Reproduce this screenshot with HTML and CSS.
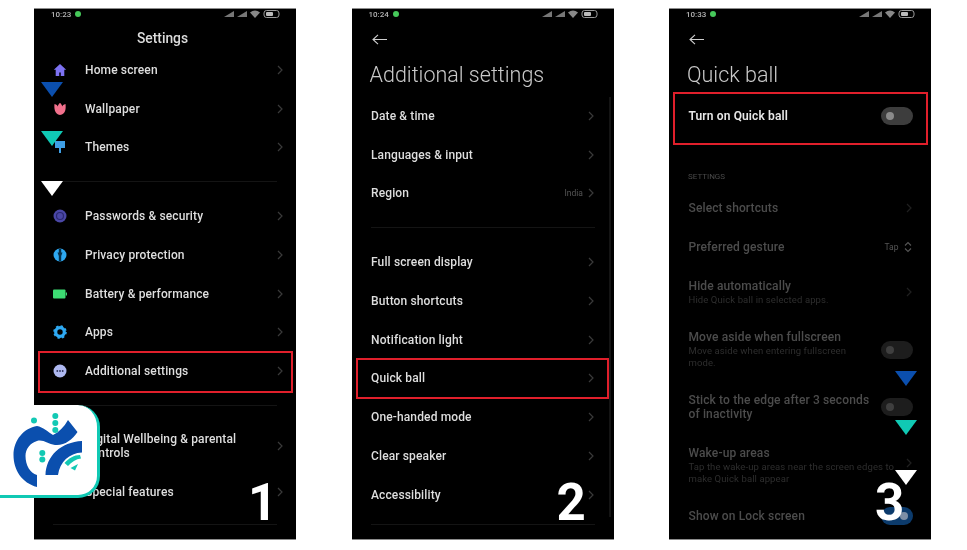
FILE: index.html
```html
<!DOCTYPE html>
<html lang="en">
<head>
<meta charset="utf-8">
<title>Quick ball steps</title>
<link rel="stylesheet" href="styles.css">
</head>
<body>
<svg class="defs" width="0" height="0" aria-hidden="true">
  <defs>
    <symbol id="chev" viewBox="0 0 6 10"><path d="M1 1l4 4-4 4" fill="none" stroke="#3a3a3a" stroke-width="1.2"/></symbol>
    <symbol id="arrow" viewBox="0 0 15 11"><path d="M15 5.500H1M6 .8L1 5.500l5 4.700" fill="none" stroke="#cfcfcf" stroke-width="1.100"/></symbol>
    <symbol id="stat" viewBox="0 0 57 10">
      <path d="M1 8L11 2v6z" fill="#777"/><path d="M14 8L24 2v6z" fill="#777"/>
      <path d="M27 3.5Q32-.5 37 3.5L32 9z" fill="#888"/>
      <rect x="41" y="1.5" width="15" height="7" rx="2.5" fill="none" stroke="#999"/><rect x="43" y="3" width="7" height="4" rx="1" fill="#bbb"/>
    </symbol>
  </defs>
</svg>
<main class="stage">

  <section class="phone p1">
    <div class="status"><span class="time">10:23</span><i class="dot"></i><svg class="stat"><use href="#stat"/></svg></div>
    <h2 class="center-title">Settings</h2>
    <div class="group">
      <div class="row"><svg class="ico" viewBox="0 0 14 14"><path d="M7 1L.8 6.8h1.9V13h8.6V6.8h1.9z" fill="#7d72f2"/><rect x="6" y="9.5" width="2" height="3.5" fill="#1b1840"/></svg><span class="label">Home screen</span><svg class="chev"><use href="#chev"/></svg></div>
      <div class="row"><svg class="ico" viewBox="0 0 14 14"><path d="M1.5 2c2 .5 3 1.5 3.2 2.5C5 3 6 1.5 7 1c1 .5 2 2 2.3 3.5C9.500 3.500 10.500 2.500 12.500 2c.5 4 .5 10-5.500 11C1.500 12 1 6 1.500 2z" fill="#f1708c"/></svg><span class="label">Wallpaper</span><svg class="chev"><use href="#chev"/></svg></div>
      <div class="row"><svg class="ico" viewBox="0 0 14 14"><path d="M2 1h10v7H8v5H6V8H2z" fill="#3f9fe6"/></svg><span class="label">Themes</span><svg class="chev"><use href="#chev"/></svg></div>
    </div>
    <hr class="rule">
    <div class="group">
      <div class="row"><svg class="ico" viewBox="0 0 14 14"><circle cx="7" cy="7" r="6.500" fill="#4a47a6"/><circle cx="7" cy="7" r="3.500" fill="none" stroke="#2a2870" stroke-width="1.200"/></svg><span class="label">Passwords &amp; security</span><svg class="chev"><use href="#chev"/></svg></div>
      <div class="row"><svg class="ico" viewBox="0 0 14 14"><circle cx="7" cy="7" r="6.500" fill="#2ea9f2"/><path d="M5.800 1h2.400v3.500H9.500L8.200 8v5H5.800V8L4.500 4.500h1.300z" fill="#06314d"/></svg><span class="label">Privacy protection</span><svg class="chev"><use href="#chev"/></svg></div>
      <div class="row"><svg class="ico" viewBox="0 0 14 14"><rect x="0" y="2.500" width="12.500" height="9" rx="1" fill="#3ddc73"/><rect x="12.800" y="5.500" width="1.200" height="3" fill="#3ddc73"/></svg><span class="label">Battery &amp; performance</span><svg class="chev"><use href="#chev"/></svg></div>
      <div class="row"><svg class="ico" viewBox="0 0 14 14"><circle cx="7" cy="7" r="4.300" fill="none" stroke="#2ea9f2" stroke-width="3.200"/><circle cx="7" cy="7" r="6" fill="none" stroke="#2ea9f2" stroke-width="1.600" stroke-dasharray="2.400 2.300"/></svg><span class="label">Apps</span><svg class="chev"><use href="#chev"/></svg></div>
      <div class="row hl"><svg class="ico" viewBox="0 0 14 14"><circle cx="7" cy="7" r="6.500" fill="#aeb8f0"/><circle cx="4.300" cy="7" r=".9" fill="#2c3158"/><circle cx="7" cy="7" r=".9" fill="#2c3158"/><circle cx="9.700" cy="7" r=".9" fill="#2c3158"/></svg><span class="label">Additional settings</span><svg class="chev"><use href="#chev"/></svg></div>
    </div>
    <hr class="rule wide">
    <div class="group">
      <div class="row tall"><span class="label multi">Digital Wellbeing &amp; parental controls</span><svg class="chev"><use href="#chev"/></svg></div>
      <div class="row"><span class="label">Special features</span><svg class="chev"><use href="#chev"/></svg></div>
    </div>
    <hr class="rule end">
    <strong class="num">1</strong>
  </section>

  <section class="phone p2">
    <div class="status"><span class="time">10:24</span><i class="dot"></i><svg class="stat"><use href="#stat"/></svg></div>
    <div class="back"><svg class="arrow"><use href="#arrow"/></svg></div>
    <h1 class="title">Additional settings</h1>
    <i class="scroll"></i>
    <div class="group">
      <div class="row"><span class="label">Date &amp; time</span><svg class="chev"><use href="#chev"/></svg></div>
      <div class="row"><span class="label">Languages &amp; input</span><svg class="chev"><use href="#chev"/></svg></div>
      <div class="row"><span class="label">Region</span><span class="value">India</span><svg class="chev"><use href="#chev"/></svg></div>
    </div>
    <hr class="rule">
    <div class="group">
      <div class="row"><span class="label">Full screen display</span><svg class="chev"><use href="#chev"/></svg></div>
      <div class="row"><span class="label">Button shortcuts</span><svg class="chev"><use href="#chev"/></svg></div>
      <div class="row"><span class="label">Notification light</span><svg class="chev"><use href="#chev"/></svg></div>
      <div class="row hl"><span class="label">Quick ball</span><svg class="chev"><use href="#chev"/></svg></div>
      <div class="row"><span class="label">One-handed mode</span><svg class="chev"><use href="#chev"/></svg></div>
      <div class="row"><span class="label">Clear speaker</span><svg class="chev"><use href="#chev"/></svg></div>
      <div class="row"><span class="label">Accessibility</span><svg class="chev"><use href="#chev"/></svg></div>
    </div>
    <hr class="rule end2">
    <strong class="num">2</strong>
  </section>

  <section class="phone p3">
    <div class="status"><span class="time">10:33</span><i class="dot"></i><svg class="stat"><use href="#stat"/></svg></div>
    <div class="back"><svg class="arrow"><use href="#arrow"/></svg></div>
    <h1 class="title">Quick ball</h1>
    <div class="row hl hl3"><span class="label strong">Turn on Quick ball</span><i class="toggle"></i></div>
    <div class="section-head">SETTINGS</div>
    <div class="row off"><span class="label">Select shortcuts</span><svg class="chev"><use href="#chev"/></svg></div>
    <div class="row off"><span class="label">Preferred gesture</span><span class="value">Tap</span><svg class="updown" viewBox="0 0 8 12"><path d="M1 4.500L4 1.500l3 3M1 7.500l3 3 3-3" fill="none" stroke="#555" stroke-width="1.100"/></svg></div>
    <div class="row off h-hide"><div class="label"><div>Hide automatically</div><div class="sub">Hide Quick ball in selected apps.</div></div><svg class="chev"><use href="#chev"/></svg></div>
    <div class="row off h-move"><div class="label"><div>Move aside when fullscreen</div><div class="sub">Move aside when entering fullscreen mode.</div></div><i class="toggle dim"></i></div>
    <div class="row off h-stick"><div class="label">Stick to the edge after 3 seconds of inactivity</div><i class="toggle dim"></i></div>
    <div class="row off h-wake"><div class="label"><div>Wake-up areas</div><div class="sub">Tap the wake-up areas near the screen edges to make Quick ball appear</div></div><svg class="chev"><use href="#chev"/></svg></div>
    <div class="row off h-show"><span class="label">Show on Lock screen</span><i class="toggle on"></i></div>
    <strong class="num">3</strong>
  </section>

  <i class="tri blue t1"></i><i class="tri teal t2"></i><i class="tri white t3"></i>
  <i class="tri blue t4"></i><i class="tri teal t5"></i><i class="tri white t6"></i>

  <div class="badge">
    <svg viewBox="0 0 97 90" width="97" height="90" role="img" aria-label="Logo">
      <g transform="translate(0,-405)">
        <path d="M37 487C22 483 13.500 470 13.500 455C13.500 440 24 428 37 426C43 427 48 432 53 435C59 432 64 427 68 420L77.500 432C72 440 64 446 55 445C48 444 43 439 37 441C30 443 25.500 449 25.500 456C25.500 465 30 473 37 475z" fill="#0b4fae"/>
        <path d="M45.500 475C46 456 61 442 82 441V452.500C69 453 60 462 58 475z" fill="#0b4fae"/>
        <path d="M64.500 463C69 458 74 455 80 455L81 458.500C76 459 71.500 462 68 466z" fill="#12c9b4"/>
        <path d="M70.500 468L78 464L75 470.500z" fill="#12c9b4"/>
        <g fill="#12c9b4"><circle cx="34" cy="420.500" r="3"/><circle cx="55.300" cy="416" r="3"/><circle cx="55.300" cy="423" r="3"/><circle cx="55.300" cy="430" r="3"/><circle cx="42.300" cy="453" r="3"/><circle cx="42.300" cy="459.500" r="3"/></g>
      </g>
    </svg>
  </div>
</main>
</body>
</html>
```
FILE: styles.css
```css
* { box-sizing: border-box; }
html, body { margin: 0; background: #fff; overflow: hidden; }
.defs { position: absolute; }
.stage {
  position: relative;
  width: 967px;
  height: 550px;
  display: flex;
  align-items: flex-start;
  gap: 55.5px;
  padding: 8px 0 0 34px;
  font-family: Roboto, "Noto Sans", sans-serif;
}
.phone {
  position: relative;
  width: 262px;
  height: 532px;
  flex: none;
  background: #000;
  border-top: 1px solid #8c8c8c;
  border-bottom: 1px solid #8c8c8c;
  color: #dedede;
  overflow: hidden;
  filter: blur(.4px);
}
.status {
  height: 12px;
  display: flex;
  align-items: center;
  padding: 0 16px 2px 17px;
  font-size: 8px;
  color: #b5b5b5;
}
.time { font-weight: 500; }
.dot { width: 6px; height: 6px; margin-left: 4px; border-radius: 50%; background: #46c85a; }
.stat { width: 57px; height: 10px; margin-left: auto; }
.center-title {
  margin: 0;
  height: 29.400px;
  padding: 5px 5px 0 0;
  line-height: 24px;
  text-align: center;
  font-size: 13.800px;
  font-weight: 500;
  color: #dcdcdc;
}
.back {
  height: 36px;
  display: flex;
  align-items: center;
  padding-left: 20px;
}
.arrow { width: 15px; height: 11px; }
.title {
  margin: 0;
  height: 39.600px;
  padding-left: 18px;
  font-size: 21.500px;
  line-height: 36px;
  font-weight: 300;
  color: #c9c9c9;
}
.row {
  position: relative;
  height: 38.750px;
  display: flex;
  align-items: center;
  padding: 0 19.500px;
  font-size: 12px;
  font-weight: 500;
  letter-spacing: .13px;
}
.p1 .row { padding: 0 13px 0 51px; }
.ico { position: absolute; left: 19px; top: 12.500px; width: 14px; height: 14px; }
.label { flex: 1; min-width: 0; }
.multi { line-height: 14px; padding-right: 10px; }
.chev { width: 6px; height: 10px; flex: none; }
.value { font-size: 8.500px; font-weight: 400; color: #555; margin-right: 5px; letter-spacing: 0; }
.rule { margin: 14.500px 19px; height: 1px; border: 0; background: #141414; }
.rule.wide { margin: 14.500px 19px 16.600px; }
.rule.end { margin: 13px 19px 0; }
.rule.end2 { margin: 10px 19px 0; }
.row.tall { height: 48px; margin-bottom: 2px; }
.row.hl::after {
  content: "";
  position: absolute;
  inset: -1px 3px -3px 4px;
  border: 2px solid #e01f2b;
}
.p2 .row.hl::after { inset: -1px 5px -1px 4px; }
.p3 .row.hl3::after { inset: -4.500px 3px -10px 4px; }
.scroll { position: absolute; left: 257px; top: 88px; width: 2px; height: 420px; background: #141414; }
.strong { color: #e8e8e8; font-weight: 600; }
.section-head { margin-top: 34.500px; height: 19px; padding-left: 19px; font-size: 8px; line-height: 14px; color: #4a4a4a; }
.off { color: #4c4c4c; }
.off .label { padding-right: 8px; }
.off .chev { opacity: .55; }
.sub { font-size: 9.500px; font-weight: 400; line-height: 12px; color: #2e2e2e; letter-spacing: .1px; margin-top: 1px; }
.h-hide { height: 52px; }
.h-move { height: 63px; }
.h-stick { height: 52px; line-height: 14px; }
.h-wake { height: 65px; }
.h-wake .chev { margin-top: -6px; }
.h-show { height: 35px; }
.toggle { position: relative; width: 32px; height: 18px; flex: none; margin-right: -1px; border-radius: 9px; background: #3d3d3d; }
.toggle::after { content: ""; position: absolute; left: 5px; top: 5px; width: 8px; height: 8px; border-radius: 50%; background: #8a8a8a; }
.toggle.dim { background: #1d1d1d; }
.toggle.dim::after { background: #3f3f3f; }
.toggle.on { background: #0c3b6c; }
.toggle.on::after { left: 19px; background: #7d8fa6; }
.updown { width: 8px; height: 12px; flex: none; }
.num {
  position: absolute;
  font-family: Roboto, sans-serif;
  font-size: 51px;
  line-height: 38px;
  font-weight: 700;
  color: #fff;
}
.p1 .num { left: 214px; top: 475px; }
.p2 .num { left: 205px; top: 475px; }
.p3 .num { left: 206px; top: 475px; }
.tri { position: absolute; width: 22px; height: 15px; clip-path: polygon(0 0, 100% 0, 50% 100%); }
.blue { background: #0b4fae; }
.teal { background: #10c9b4; }
.white { background: #fff; }
.t1 { left: 41px; top: 82px; }
.t2 { left: 41px; top: 131px; }
.t3 { left: 41px; top: 181px; }
.t4 { left: 895px; top: 371px; }
.t5 { left: 895px; top: 420px; }
.t6 { left: 895px; top: 470px; }
.badge {
  position: absolute;
  left: -6px;
  top: 405px;
  width: 106px;
  height: 93px;
  padding-left: 6px;
  background: #fff;
  border-right: 3px solid #10c9b4;
  border-bottom: 3px solid #10c9b4;
  border-radius: 0 22px 22px 0;
}
.badge svg { display: block; }
```
